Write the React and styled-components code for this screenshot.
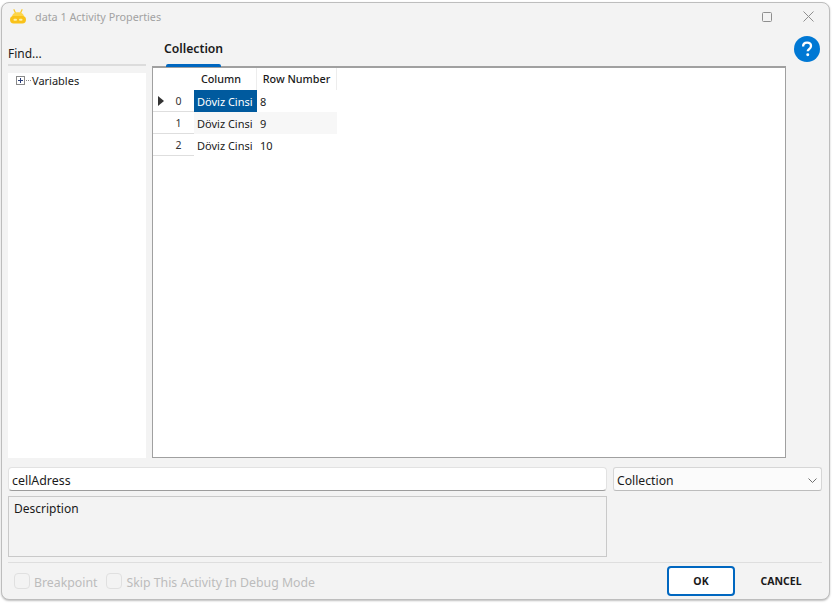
import React from 'react'
import styled, { createGlobalStyle } from 'styled-components'

const rows = [
  { index: 0, column: 'Döviz Cinsi', number: '8', selected: true },
  { index: 1, column: 'Döviz Cinsi', number: '9', striped: true },
  { index: 2, column: 'Döviz Cinsi', number: '10' },
]

const GlobalStyle = createGlobalStyle`
  html, body {
    margin: 0;
    padding: 0;
    background: #fff;
  }
  body {
    font-family: "Noto Sans", "Open Sans", sans-serif;
    font-size: 12px;
    color: #1a1a1a;
  }
`

const Page = styled.div`
  width: 833px;
  height: 603px;
  padding: 2px 3px 3px 1px;
  box-sizing: border-box;
  overflow: hidden;
`

const Window = styled.div`
  width: 100%;
  height: 100%;
  box-sizing: border-box;
  display: flex;
  flex-direction: column;
  background: #f3f3f3;
  border: 1px solid #bdbdbd;
  border-radius: 8px;
  box-shadow: 0 1px 2px rgba(0, 0, 0, 0.25);
`

const TitleBar = styled.div`
  height: 29px;
  display: flex;
  align-items: center;
  padding: 0 15px 2px 7px;
  box-sizing: border-box;
  flex: none;
`

const TitleText = styled.span`
  margin-left: 8px;
  font-size: 10.8px;
  color: #a2a2a2;
`

const WindowButtons = styled.div`
  margin-left: auto;
  display: flex;
  align-items: center;
  gap: 31px;
`

const Main = styled.div`
  display: grid;
  grid-template-columns: 138px 634px 28px;
  column-gap: 6px;
  padding: 0 0 0 6px;
  flex: none;
  height: 426px;
`

const Sidebar = styled.div`
  display: flex;
  flex-direction: column;
  min-height: 0;
`

const FindLabel = styled.div`
  height: 34px;
  box-sizing: border-box;
  padding-top: 13px;
  line-height: 17px;
  border-bottom: 2px solid #dcdcdc;
  font-size: 12px;
`

const Tree = styled.div`
  margin-top: 7px;
  flex: 1;
  background: #fff;
  padding: 0 0 0 8px;
`

const TreeRow = styled.div`
  display: flex;
  align-items: center;
  height: 15px;
  font-size: 11px;
`

const Dots = styled.span`
  width: 5px;
  height: 1px;
  margin: 0 1px 0 1px;
  border-top: 1px dotted #888;
`

const Content = styled.div`
  display: flex;
  flex-direction: column;
  min-height: 0;
`

const Tabs = styled.div`
  height: 35px;
  flex: none;
  padding-left: 12px;
  display: flex;
`

const Tab = styled.div`
  position: relative;
  width: 59px;
  padding-top: 8px;
  line-height: 18px;
  font-size: 12.2px;
  font-weight: 600;
  white-space: nowrap;
  color: #1a1a1a;
  &::after {
    content: '';
    position: absolute;
    left: 2px;
    right: 2px;
    bottom: 0;
    height: 3px;
    background: #0067c0;
    border-radius: 2px 2px 0 0;
  }
`

const GridPanel = styled.div`
  flex: 1;
  background: #fff;
  border: 1px solid #a0a0a0;
  border-top-width: 2px;
  margin-top: -1px;
  box-sizing: border-box;
`

const Table = styled.div`
  display: grid;
  grid-template-columns: 41px 63px 80px;
  grid-auto-rows: 22px;
  width: 184px;
`

const HeaderCell = styled.div`
  display: flex;
  align-items: center;
  justify-content: center;
  box-sizing: border-box;
  padding: 0 ${p => p.$inset || 0}px 1px 0;
  font-size: 10.8px;
  font-weight: 500;
  border-right: ${p => (p.$blank ? 'none' : '1px solid #ededed')};
`

const RowHeader = styled.div`
  position: relative;
  display: flex;
  align-items: center;
  justify-content: center;
  padding: 1px 0 0 10px;
  box-sizing: border-box;
  font-size: 10.5px;
  color: #333;
  border-bottom: 1px solid #dedede;
`

const Pointer = styled.span`
  position: absolute;
  left: 5px;
  top: 6px;
  width: 0;
  height: 0;
  border-left: 6px solid #333;
  border-top: 5px solid transparent;
  border-bottom: 5px solid transparent;
`

const Cell = styled.div`
  display: flex;
  align-items: center;
  padding: 1px 0 0 3px;
  white-space: nowrap;
  overflow: hidden;
  font-size: 11px;
  background: ${p => (p.$selected ? '#005a9e' : p.$striped ? '#f7f7f7' : '#fff')};
  color: ${p => (p.$selected ? '#fff' : '#1a1a1a')};
`

const HelpColumn = styled.div`
  padding-top: 3px;
  padding-left: 2px;
  display: flex;
  justify-content: flex-start;
`

const FormArea = styled.div`
  display: grid;
  grid-template-columns: 599px 209px;
  column-gap: 6px;
  row-gap: 5px;
  padding: 9px 0 0 6px;
  flex: none;
`

const NameInput = styled.div`
  height: 24px;
  box-sizing: border-box;
  background: #fff;
  border: 1px solid #e2e2e2;
  border-bottom-color: #9c9c9c;
  border-radius: 4px;
  padding: 2px 0 0 3px;
  display: flex;
  align-items: center;
  font-size: 12.4px;
`

const Select = styled.div`
  height: 24px;
  box-sizing: border-box;
  background: #fbfbfb;
  border: 1px solid #d6d6d6;
  border-bottom-color: #bcbcbc;
  border-radius: 3px;
  padding: 2px 4px 0 3px;
  display: flex;
  align-items: center;
  justify-content: space-between;
  font-size: 12.2px;
`

const Description = styled.div`
  height: 61px;
  box-sizing: border-box;
  border: 1px solid #c9c9c9;
  padding: 3px 5px;
  line-height: 17px;
  font-size: 12px;
`

const Footer = styled.div`
  margin: 5px 7px 0 6px;
  border-top: 1px solid #dedede;
  flex: 1;
  display: flex;
  align-items: center;
  padding: 0 0 0 6px;
`

const CheckOption = styled.label`
  display: flex;
  align-items: center;
  gap: 4px;
  margin-right: 9px;
  font-size: 12.3px;
  color: #bcbcbc;
`

const CheckLabel = styled.span`
  padding-top: 2px;
`

const CheckBox = styled.span`
  width: 16px;
  height: 16px;
  box-sizing: border-box;
  border: 1px solid #e0e0e0;
  border-radius: 4px;
`

const Actions = styled.div`
  margin-left: auto;
  margin-right: -5px;
  display: flex;
  align-items: center;
`

const Button = styled.button`
  height: 30px;
  width: ${p => (p.$primary ? '68px' : '92px')};
  box-sizing: border-box;
  padding: 0;
  background: ${p => (p.$primary ? '#fff' : 'transparent')};
  border: ${p => (p.$primary ? '2px solid #0067c0' : 'none')};
  border-radius: 4px;
  font-family: inherit;
  font-size: 10.5px;
  font-weight: 700;
  color: #1a1a1a;
`

const RobotLogo = () => (
  <svg width="18" height="16" viewBox="0 0 18 16">
    <path d="M5 .8 6.500 4M13 .8 11.500 4" stroke="#fbcb2e" strokeWidth="1.300" fill="none" strokeLinecap="round" />
    <path d="M3 8c0-3 2.500-4.800 6-4.800S15 5 15 8z" fill="#fdd54a" />
    <rect x="1" y="7" width="16" height="7.500" rx="3.700" fill="#f9c21a" />
    <rect x="4.500" y="9.700" width="3.500" height="2" rx="1" fill="#fff0a8" />
    <rect x="10" y="9.700" width="3.500" height="2" rx="1" fill="#fff0a8" />
  </svg>
)

const MaximizeIcon = () => (
  <svg width="10" height="10" viewBox="0 0 10 10">
    <rect x="0.500" y="0.500" width="9" height="9" rx="1" fill="none" stroke="#8f8f8f" />
  </svg>
)

const CloseIcon = () => (
  <svg width="11" height="11" viewBox="0 0 11 11">
    <path d="M.5.5l10 10M10.500.5l-10 10" fill="none" stroke="#8f8f8f" />
  </svg>
)

const HelpIcon = () => (
  <svg width="28" height="28" viewBox="0 0 28 28">
    <circle cx="14" cy="14" r="14" fill="#0078d4" />
    <path
      d="M9.800 11.200c0-2.500 1.800-4 4.300-4s4.200 1.400 4.200 3.600c0 1.700-.9 2.600-2.100 3.400-1 .7-1.400 1.200-1.400 2.200"
      fill="none"
      stroke="#fff"
      strokeWidth="2.500"
    />
    <circle cx="14.800" cy="20.200" r="1.600" fill="#fff" />
  </svg>
)

const ExpanderIcon = () => (
  <svg width="9" height="9" viewBox="0 0 9 9">
    <rect x="0.500" y="0.500" width="8" height="8" fill="#fff" stroke="#8a8a8a" />
    <path d="M2 4.500h5M4.500 2v5" stroke="#2b3f7a" />
  </svg>
)

const ChevronIcon = () => (
  <svg width="9" height="5" viewBox="0 0 9 5">
    <path d="M.5.500l4 4 4-4" fill="none" stroke="#707070" />
  </svg>
)

export default function App() {
  return (
    <>
      <GlobalStyle />
      <Page>
        <Window>
          <TitleBar>
            <RobotLogo />
            <TitleText>data 1 Activity Properties</TitleText>
            <WindowButtons>
              <MaximizeIcon />
              <CloseIcon />
            </WindowButtons>
          </TitleBar>
          <Main>
            <Sidebar>
              <FindLabel>Find...</FindLabel>
              <Tree>
                <TreeRow>
                  <ExpanderIcon />
                  <Dots />
                  Variables
                </TreeRow>
              </Tree>
            </Sidebar>
            <Content>
              <Tabs>
                <Tab>Collection</Tab>
              </Tabs>
              <GridPanel>
                <Table>
                  <HeaderCell $blank />
                  <HeaderCell $inset={8}>Column</HeaderCell>
                  <HeaderCell>Row Number</HeaderCell>
                  {rows.map(row => (
                    <React.Fragment key={row.index}>
                      <RowHeader>
                        {row.selected && <Pointer />}
                        {row.index}
                      </RowHeader>
                      <Cell $selected={row.selected} $striped={row.striped}>{row.column}</Cell>
                      <Cell $striped={row.striped}>{row.number}</Cell>
                    </React.Fragment>
                  ))}
                </Table>
              </GridPanel>
            </Content>
            <HelpColumn>
              <HelpIcon />
            </HelpColumn>
          </Main>
          <FormArea>
            <NameInput>cellAdress</NameInput>
            <Select>
              Collection
              <ChevronIcon />
            </Select>
            <Description>Description</Description>
          </FormArea>
          <Footer>
            <CheckOption>
              <CheckBox />
              <CheckLabel>Breakpoint</CheckLabel>
            </CheckOption>
            <CheckOption>
              <CheckBox />
              <CheckLabel>Skip This Activity In Debug Mode</CheckLabel>
            </CheckOption>
            <Actions>
              <Button $primary>OK</Button>
              <Button>CANCEL</Button>
            </Actions>
          </Footer>
        </Window>
      </Page>
    </>
  )
}
